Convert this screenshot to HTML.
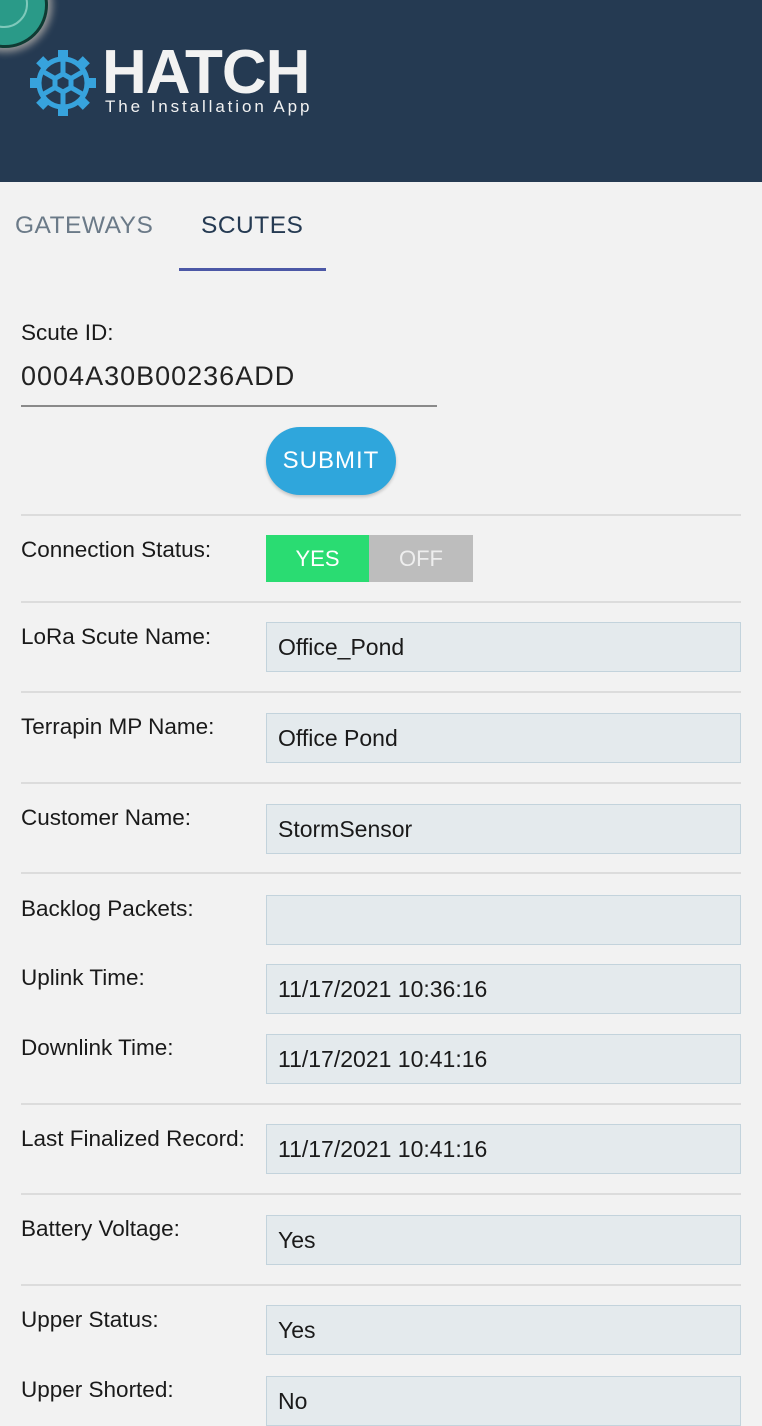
<!DOCTYPE html>
<html><head><style>
body{margin:0;width:762px;height:1426px;background:#f2f2f2;font-family:"Liberation Sans",sans-serif;position:relative;overflow:hidden;color:#1a1a1a}
.a{position:absolute}
.hdr{left:0;top:0;width:762px;height:182px;background:#253a52}
.lbl{left:21px;font-size:22.5px;color:#1a1a1a}
.inp{left:266px;width:475px;height:50px;background:#e4eaed;border:1.5px solid #c3d3dc;font-size:23px;line-height:48px;padding-left:11px;box-sizing:border-box}
.hr{left:21px;width:720px;height:2px;background:#dcdcdc}
</style></head><body>
<div class="a hdr"></div>
<div class="a" style="left:-38px;top:-38px;width:80px;height:80px;border-radius:50%;background:#2a9a88;border:3px solid #0f3b33;box-shadow:0 0 8px 4px #999"></div>
<div class="a" style="left:-20px;top:-20px;width:44px;height:44px;border-radius:50%;border:2px solid #7fc9bb"></div>
<svg class="a" style="left:29px;top:49px" width="68" height="68" viewBox="0 0 68 68">
<g fill="none" stroke="#37a3dd" stroke-width="5">
<circle cx="34" cy="34" r="24"/>
<polygon points="34,25 42,29.5 42,38.5 34,43 26,38.5 26,29.5"/>
<line x1="34" y1="25" x2="34" y2="10"/><line x1="42" y1="29.5" x2="55" y2="22"/><line x1="42" y1="38.5" x2="55" y2="46"/><line x1="34" y1="43" x2="34" y2="58"/><line x1="26" y1="38.5" x2="13" y2="46"/><line x1="26" y1="29.5" x2="13" y2="22"/>
</g>
<g fill="#37a3dd"><rect x="29" y="1" width="10" height="10"/><rect x="29" y="57" width="10" height="10"/><rect x="1" y="29" width="10" height="10"/><rect x="57" y="29" width="10" height="10"/>
<rect x="29" y="1" width="10" height="10" transform="rotate(45 34 34)"/><rect x="29" y="1" width="10" height="10" transform="rotate(135 34 34)"/><rect x="29" y="1" width="10" height="10" transform="rotate(225 34 34)"/><rect x="29" y="1" width="10" height="10" transform="rotate(315 34 34)"/></g>
</svg>
<div class="a" style="left:102px;top:40px;font-size:62px;font-weight:bold;color:#f2f2f2;line-height:66px;letter-spacing:-1px">HATCH</div>
<div class="a" style="left:105px;top:97px;font-size:17px;color:#f2f2f2;letter-spacing:2.9px">The Installation App</div>

<div class="a" style="left:15px;top:212px;font-size:24.5px;color:#6b7a88;letter-spacing:0.5px">GATEWAYS</div>
<div class="a" style="left:201px;top:212px;font-size:24.5px;color:#253a52;letter-spacing:0.5px">SCUTES</div>
<div class="a" style="left:179px;top:268px;width:147px;height:3px;background:#4c58a6"></div>

<div class="a lbl" style="top:320px">Scute ID:</div>
<div class="a" style="left:21px;top:361px;font-size:27px;color:#222;letter-spacing:1px">0004A30B00236ADD</div>
<div class="a" style="left:21px;top:405px;width:416px;height:2px;background:#8a8a8a"></div>
<div class="a" style="left:266px;top:427px;width:130px;height:68px;border-radius:34px;background:#2fa6dc;color:#fff;font-size:24px;letter-spacing:1px;line-height:68px;text-align:center;box-shadow:0 2px 3px rgba(0,0,0,.2)">SUBMIT</div>

<div class="a hr" style="top:514px"></div>
<div class="a lbl" style="top:537px">Connection Status:</div>
<div class="a" style="left:266px;top:535px;width:103px;height:47px;background:#2adc72;color:#fff;font-size:22px;line-height:47px;text-align:center">YES</div>
<div class="a" style="left:369px;top:535px;width:104px;height:47px;background:#bdbdbd;color:#eee;font-size:22px;line-height:47px;text-align:center">OFF</div>

<div class="a hr" style="top:601px"></div>
<div class="a lbl" style="top:624px">LoRa Scute Name:</div>
<div class="a inp" style="top:622px">Office_Pond</div>
<div class="a hr" style="top:691px"></div>
<div class="a lbl" style="top:714px">Terrapin MP Name:</div>
<div class="a inp" style="top:713px">Office Pond</div>
<div class="a hr" style="top:782px"></div>
<div class="a lbl" style="top:805px">Customer Name:</div>
<div class="a inp" style="top:804px">StormSensor</div>
<div class="a hr" style="top:872px"></div>
<div class="a lbl" style="top:896px">Backlog Packets:</div>
<div class="a inp" style="top:895px"></div>
<div class="a lbl" style="top:965px">Uplink Time:</div>
<div class="a inp" style="top:964px">11/17/2021 10:36:16</div>
<div class="a lbl" style="top:1035px">Downlink Time:</div>
<div class="a inp" style="top:1034px">11/17/2021 10:41:16</div>
<div class="a hr" style="top:1103px"></div>
<div class="a lbl" style="top:1126px">Last Finalized Record:</div>
<div class="a inp" style="top:1124px">11/17/2021 10:41:16</div>
<div class="a hr" style="top:1193px"></div>
<div class="a lbl" style="top:1216px">Battery Voltage:</div>
<div class="a inp" style="top:1215px">Yes</div>
<div class="a hr" style="top:1284px"></div>
<div class="a lbl" style="top:1307px">Upper Status:</div>
<div class="a inp" style="top:1305px">Yes</div>
<div class="a lbl" style="top:1377px">Upper Shorted:</div>
<div class="a inp" style="top:1376px">No</div>
</body></html>
